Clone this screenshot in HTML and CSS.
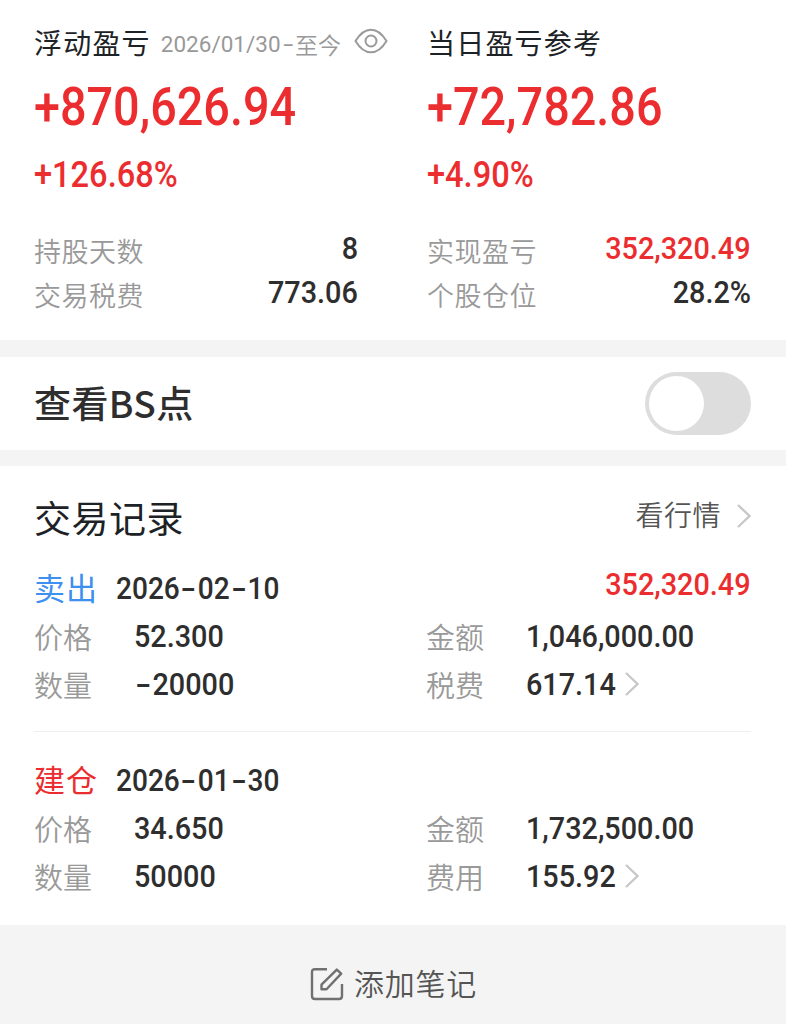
FILE: index.html
```
<!DOCTYPE html>
<html lang="zh-CN">
<head>
    <meta charset="UTF-8">
    <meta name="viewport" content="width=device-width, initial-scale=1.0">
    <title>交易记录</title>
    <link rel="stylesheet" href="styles.css">
</head>
<body>
    <section class="summary">
        <div class="summary-col">
            <div class="summary-title">
                <span>浮动盈亏</span>
                <span class="period"><span class="period-date">2026/01/30<i class="dash">-</i></span>至今</span>
                <svg class="eye" viewBox="0 0 34 26" fill="none" stroke="#9a9a9a" stroke-width="2">
                    <path d="M1.500 13C6 5.500 11 1.700 17 1.700S28 5.500 32.500 13C28 20.500 23 24.300 17 24.300S6 20.500 1.500 13Z"/>
                    <circle cx="17" cy="13" r="5.500"/>
                </svg>
            </div>
            <div class="total"><span class="num">+870,626.94</span></div>
            <div class="percent"><span class="num">+126.68%</span></div>
            <div class="stat"><span class="label">持股天数</span><span class="num">8</span></div>
            <div class="stat"><span class="label">交易税费</span><span class="num">773.06</span></div>
        </div>
        <div class="summary-col">
            <div class="summary-title"><span>当日盈亏参考</span></div>
            <div class="total"><span class="num">+72,782.86</span></div>
            <div class="percent"><span class="num">+4.90%</span></div>
            <div class="stat"><span class="label">实现盈亏</span><span class="num red">352,320.49</span></div>
            <div class="stat"><span class="label">个股仓位</span><span class="num">28.2%</span></div>
        </div>
    </section>

    <section class="bs-row">
        <span class="bs-title">查看BS点</span>
        <div class="switch"><div class="knob"></div></div>
    </section>

    <section class="records">
        <div class="records-header">
            <h2>交易记录</h2>
            <div class="more">
                <span>看行情</span>
                <svg class="chevron" viewBox="0 0 14 24" fill="none" stroke="#c8c8c8" stroke-width="2.400"><path d="M1 1L12.500 12L1 23"/></svg>
            </div>
        </div>

        <div class="record">
            <div class="record-head">
                <span class="type sell">卖出</span>
                <span class="num date">2026<i class="dash">-</i>02<i class="dash">-</i>10</span>
                <span class="num profit red">352,320.49</span>
            </div>
            <div class="record-line">
                <div class="cell"><span class="label">价格</span><span class="num">52.300</span></div>
                <div class="cell"><span class="label">金额</span><span class="num">1,046,000.00</span></div>
            </div>
            <div class="record-line">
                <div class="cell"><span class="label">数量</span><span class="num"><i class="dash">-</i>20000</span></div>
                <div class="cell">
                    <span class="label">税费</span><span class="num fee">617.14</span>
                    <svg class="chevron" viewBox="0 0 14 24" fill="none" stroke="#c8c8c8" stroke-width="2.400"><path d="M1 1L12.500 12L1 23"/></svg>
                </div>
            </div>
        </div>

        <div class="record">
            <div class="record-head">
                <span class="type buy">建仓</span>
                <span class="num date">2026<i class="dash">-</i>01<i class="dash">-</i>30</span>
            </div>
            <div class="record-line">
                <div class="cell"><span class="label">价格</span><span class="num">34.650</span></div>
                <div class="cell"><span class="label">金额</span><span class="num">1,732,500.00</span></div>
            </div>
            <div class="record-line">
                <div class="cell"><span class="label">数量</span><span class="num">50000</span></div>
                <div class="cell">
                    <span class="label">费用</span><span class="num fee">155.92</span>
                    <svg class="chevron" viewBox="0 0 14 24" fill="none" stroke="#c8c8c8" stroke-width="2.400"><path d="M1 1L12.500 12L1 23"/></svg>
                </div>
            </div>
        </div>
    </section>

    <footer class="note">
        <svg class="note-icon" viewBox="0 0 34 34" fill="none" stroke="#707070" stroke-width="2.400">
            <path d="M17 2.200H5Q2 2.200 2 5.200V29Q2 32 5 32H29Q32 32 32 29V17"/>
            <path d="M11.500 22.300V17.700L26.800 2.600L31.200 6.600L16.500 22.300Z" stroke-linejoin="round"/>
        </svg>
        <span>添加笔记</span>
    </footer>
</body>
</html>
```
FILE: styles.css
```
* {
    margin: 0;
    padding: 0;
    box-sizing: border-box;
}

body {
    font-family: 'Noto Sans CJK SC', sans-serif;
    background: #f4f4f4;
    color: #2e2e2e;
    white-space: nowrap;
}

section {
    background: white;
    margin-bottom: 16px;
}

.num {
    display: inline-block;
    font-family: Roboto, sans-serif;
    font-weight: 500;
    font-size: 32px;
    transform: scaleX(0.9);
    transform-origin: left center;
}

.red {
    color: #ec2d2f;
}

.label {
    color: #999;
    font-weight: 350;
}

/* wide hyphen */
.dash {
    display: inline-block;
    font-style: normal;
    width: 0.64em;
    text-align: center;
    transform: scaleX(1.6);
}

/* summary */
.summary {
    height: 340px;
    padding: 22px 36px 0 34px;
    display: flex;
    gap: 69px;
    margin-bottom: 17px;
}

.summary-col {
    flex: 0 0 324px;
    min-width: 0;
}

.summary-title {
    height: 40px;
    display: flex;
    align-items: center;
    font-size: 28px;
    letter-spacing: 1.2px;
    color: #1d2226;
}

.period {
    display: flex;
    align-items: center;
    margin: 3px 0 0 10px;
    font-size: 23px;
    font-weight: 350;
    letter-spacing: 0;
    color: #999;
}

.period-date {
    font-family: Roboto, sans-serif;
    font-weight: 400;
    font-size: 22.5px;
}

.eye {
    width: 34px;
    height: 26px;
    margin: -2px 0 0 13px;
    flex: none;
}

.total,
.percent {
    color: #ec2d2f;
}

.total {
    height: 90px;
    line-height: 89px;
}

.total .num {
    font-size: 54px;
    transform: scaleX(0.866);
}

.percent {
    height: 44px;
    line-height: 46px;
}

.percent .num {
    font-size: 36px;
    transform: scaleX(0.905);
}

.stat {
    height: 44px;
    display: flex;
    justify-content: space-between;
    align-items: center;
}

.percent + .stat {
    margin-top: 32px;
}

.stat .label {
    font-size: 27px;
    letter-spacing: 0.5px;
}

.stat .num {
    margin-top: -4px;
    transform-origin: right center;
}

/* BS switch */
.bs-row {
    height: 93px;
    padding: 0 35px 0 34px;
    display: flex;
    justify-content: space-between;
    align-items: center;
}

.bs-title {
    margin-top: -3px;
    font-size: 37px;
    font-weight: 500;
    letter-spacing: 0.4px;
}

.switch {
    width: 106px;
    height: 63px;
    padding: 4px;
    border-radius: 32px;
    background: #ddd;
}

.knob {
    width: 55px;
    height: 55px;
    border-radius: 50%;
    background: white;
}

/* records */
.records {
    height: 459px;
    padding: 26px 35px 0 34px;
    margin-bottom: 0;
}

.records-header {
    height: 50px;
    display: flex;
    justify-content: space-between;
    align-items: center;
}

.records-header h2 {
    font-size: 37px;
    font-weight: 400;
    letter-spacing: 0.5px;
    color: #1d2226;
}

.more {
    display: flex;
    align-items: center;
    margin-top: -7px;
    font-size: 28px;
    font-weight: 350;
    letter-spacing: 0.5px;
    color: #555;
}

.chevron {
    width: 14px;
    height: 24px;
    flex: none;
}

.more .chevron {
    margin: 4px 0 0 16px;
}

.record {
    height: 189px;
    padding-top: 20px;
}

.record + .record {
    border-top: 1px solid #eee;
    padding-top: 22px;
}

.record-head {
    height: 50px;
    display: flex;
    align-items: center;
}

.type {
    margin-top: -2px;
    font-size: 31px;
    width: 82px;
    letter-spacing: 1px;
}

.sell {
    color: #3d8ff0;
}

.buy {
    color: #ec2d2f;
}

.date {
    margin-top: 3px;
    font-size: 30.5px;
    font-weight: 500;
    transform: scaleX(0.92);
}

.profit {
    margin: -7px 0 0 auto;
    transform-origin: right center;
}

.record-line {
    height: 48px;
    display: flex;
}

.cell {
    width: 392px;
    flex: none;
    display: flex;
    align-items: center;
}

.cell .label {
    width: 100px;
    font-size: 29px;
}

.fee + .chevron {
    margin-left: -1px;
}

/* footer */
.note {
    height: 99px;
    padding: 19px 0 0 1px;
    display: flex;
    justify-content: center;
    align-items: center;
    font-size: 30px;
    font-weight: 350;
    letter-spacing: 0.8px;
    color: #555;
}

.note span {
    margin-top: -4px;
}

.note-icon {
    width: 34px;
    height: 34px;
    margin-right: 10px;
}
```
